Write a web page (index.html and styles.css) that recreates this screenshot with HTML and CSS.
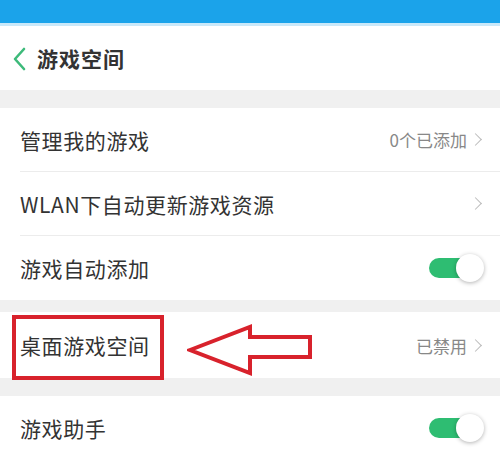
FILE: index.html
```html
<!DOCTYPE html>
<html lang="zh-CN">
<head>
    <meta charset="UTF-8">
    <meta name="viewport" content="width=device-width, initial-scale=1.0">
    <title>游戏空间</title>
    <link rel="stylesheet" href="styles.css">
</head>
<body>

<div class="statusbar"></div>

<div class="header">
    <svg class="back" width="16" height="24" viewBox="0 0 16 24">
        <polyline points="12,2 3,12 12,22" fill="none" stroke="#3dba7a" stroke-width="2.6" stroke-linecap="round" stroke-linejoin="round"/>
    </svg>
    <h1>游戏空间</h1>
</div>

<div class="gap gap-top"></div>

<div class="group">
    <div class="row">
        <span class="label">管理我的游戏</span>
        <span class="value">0个已添加</span>
        <span class="chevron"></span>
    </div>
    <div class="row">
        <span class="label">WLAN下自动更新游戏资源</span>
        <span class="chevron"></span>
    </div>
    <div class="row last">
        <span class="label">游戏自动添加</span>
        <span class="toggle on"><span class="knob"></span></span>
    </div>
</div>

<div class="gap gap-mid"></div>

<div class="group">
    <div class="row last tall">
        <span class="label">桌面游戏空间</span>
        <span class="value">已禁用</span>
        <span class="chevron"></span>
        <!-- 标注 -->
        <span class="mark-box"></span>
        <svg class="mark-arrow" width="128" height="52" viewBox="0 0 128 52">
            <polygon points="3,26 63,3 63,13 123,13 123,33 63,33 63,49" fill="#fff" stroke="#d8222c" stroke-width="4" stroke-linejoin="miter"/>
        </svg>
    </div>
</div>

<div class="gap gap-bottom"></div>

<div class="group">
    <div class="row last">
        <span class="label">游戏助手</span>
        <span class="toggle on"><span class="knob"></span></span>
    </div>
</div>

</body>
</html>
```

FILE: styles.css
```css
body { margin: 0; padding: 0; background-color: #fff; color: #333; font-family: "Noto Sans CJK SC", "Noto Sans", sans-serif; overflow: hidden; }
.statusbar { height: 23px; background-color: #1ba3ea; border-bottom: 3px solid #c9e8f9; }
.header { height: 64px; display: flex; align-items: center; padding-left: 12px; background-color: #fff; }
.header .back { margin-right: 9px; margin-top: 1px; }
.header h1 { margin: 0; font-size: 21px; font-weight: 600; color: #333; letter-spacing: 1px; }
.gap { background-color: #f0f0f0; }
.gap-top { height: 18px; }
.gap-mid { height: 12px; }
.gap-bottom { height: 18px; }
.group { background-color: #fff; padding-left: 20px; }
.row { position: relative; height: 63px; display: flex; align-items: center; border-bottom: 1px solid #ececec; padding-right: 17px; }
.row.last { border-bottom: none; height: 64px; }
.row.tall { height: 66px; }
.label { flex: 1; font-size: 21px; color: #333; letter-spacing: 0.6px; }
.value { font-size: 17px; color: #888; margin-right: 4px; }
.chevron { width: 8px; height: 8px; border-top: 1.5px solid #bbb; border-right: 1.5px solid #bbb; transform: rotate(45deg); margin-right: 3px; }
.toggle { position: relative; width: 42px; height: 20px; border-radius: 10px; background-color: #2ebd72; margin-right: 12px; }
.toggle .knob { position: absolute; left: 27px; top: -4px; width: 28px; height: 28px; border-radius: 50%; background-color: #fff; box-shadow: 0 1px 4px rgba(0, 0, 0, 0.3); }
.mark-box { position: absolute; left: -8px; top: 3px; width: 144px; height: 57px; border: 4px solid #d8222c; }
.mark-arrow { position: absolute; left: 167px; top: 12px; }
```
